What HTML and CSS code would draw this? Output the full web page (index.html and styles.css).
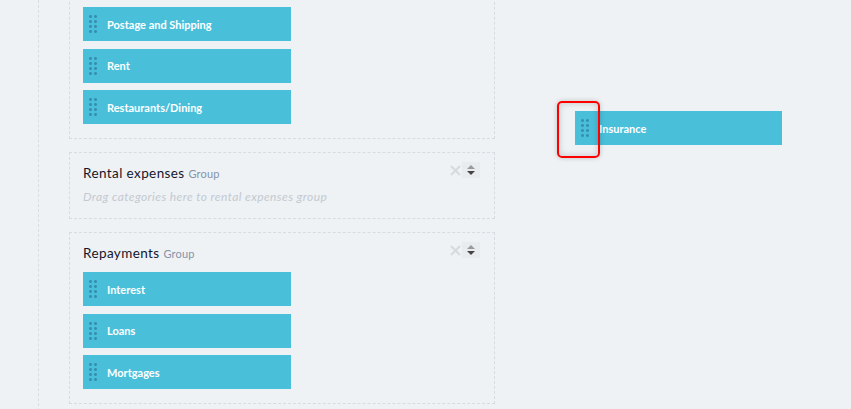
FILE: index.html
```html
<!DOCTYPE html>
<html>

<head>
    <meta charset="utf-8" />
    <title>Category groups</title>
    <meta name="viewport" content="width=device-width, initial-scale=1">
    <link rel="stylesheet" href="styles.css">
</head>

<body>
    <div class="board">
        <div class="groups">

            <div class="group">
                <div class="group-head">
                    <div class="group-title">Operating expenses <span class="tag">Group</span></div>
                </div>
                <div class="item"><span class="handle"></span>Postage and Shipping</div>
                <div class="item"><span class="handle"></span>Rent</div>
                <div class="item"><span class="handle"></span>Restaurants/Dining</div>
            </div>

            <div class="group">
                <div class="group-head">
                    <div class="group-title">Rental expenses <span class="tag">Group</span></div>
                    <div class="tools">
                        <span class="remove">
                            <svg width="11" height="11" viewBox="0 0 11 11"><path d="M1 1L10 10M10 1L1 10" stroke="#d6d9dd" stroke-width="2" /></svg>
                        </span>
                        <span class="sorter">
                            <svg width="10" height="12" viewBox="0 0 10 12"><path d="M5 1L9 5H1Z" fill="#9a9a9a" /><path d="M1 7H9L5 11Z" fill="#444" /></svg>
                        </span>
                    </div>
                </div>
                <div class="empty">Drag categories here to rental expenses group</div>
            </div>

            <div class="group">
                <div class="group-head">
                    <div class="group-title">Repayments <span class="tag">Group</span></div>
                    <div class="tools">
                        <span class="remove">
                            <svg width="11" height="11" viewBox="0 0 11 11"><path d="M1 1L10 10M10 1L1 10" stroke="#d6d9dd" stroke-width="2" /></svg>
                        </span>
                        <span class="sorter">
                            <svg width="10" height="12" viewBox="0 0 10 12"><path d="M5 1L9 5H1Z" fill="#9a9a9a" /><path d="M1 7H9L5 11Z" fill="#444" /></svg>
                        </span>
                    </div>
                </div>
                <div class="item"><span class="handle"></span>Interest</div>
                <div class="item"><span class="handle"></span>Loans</div>
                <div class="item"><span class="handle"></span>Mortgages</div>
            </div>

        </div>
    </div>

    <!-- item being dragged -->
    <div class="item dragging"><span class="handle"></span>Insurance</div>
    <div class="hint"></div>
</body>

</html>
```

FILE: styles.css
```css
body {
    margin: 0;
    background-color: #eef2f5;
    font-family: "Lato", "Open Sans", sans-serif;
    height: 409px;
    overflow: hidden;
}

.board {
    margin-left: 38px;
    border-left: 1px dashed #d9dee3;
    padding-left: 30px;
    padding-top: 1px;
    height: 430px;
}

.groups {
    margin-top: -34px;
}

.group {
    width: 398px;
    border: 1px dashed #d6dce2;
    padding: 12px 13px 14px 13px;
    margin-bottom: 13px;
}

.group-head {
    display: flex;
    align-items: flex-start;
    margin-bottom: 10px;
}

.group-title {
    font-size: 13.5px;
    line-height: 16px;
    color: #15152a;
    letter-spacing: 0.4px;
}

.tag {
    font-size: 11px;
    color: #8592a9;
    letter-spacing: 0.2px;
}

.tools {
    margin-left: auto;
    margin-right: 1px;
    display: flex;
    align-items: center;
    margin-top: -3px;
}

.remove {
    display: flex;
    margin-right: 1px;
}

.sorter {
    display: flex;
    align-items: center;
    justify-content: center;
    width: 18px;
    height: 16px;
    background-color: #e9ecef;
}

.empty {
    margin-top: -2px;
    font-size: 12px;
    line-height: 14px;
    font-style: italic;
    color: #c3c9d1;
    letter-spacing: 0.4px;
}

.item {
    display: flex;
    align-items: center;
    width: 208px;
    height: 34px;
    margin-bottom: 7.5px;
    background-color: #4abfda;
    color: #ffffff;
    font-size: 11px;
    font-weight: bold;
}

.item:last-child {
    margin-bottom: 0;
}

.handle {
    width: 10px;
    height: 20px;
    margin-left: 5px;
    margin-right: 9px;
    background-image: radial-gradient(circle, #3590b2 1.2px, transparent 1.7px);
    background-size: 5px 5px;
}

.dragging {
    position: absolute;
    left: 575px;
    top: 111px;
    width: 207px;
}

.hint {
    position: absolute;
    left: 557px;
    top: 101px;
    width: 39px;
    height: 53px;
    border: 2px solid #ff0000;
    border-radius: 5px;
    box-shadow: 0 0 5px rgba(0, 0, 0, 0.2), inset 0 0 7px rgba(0, 0, 0, 0.18);
}
```
